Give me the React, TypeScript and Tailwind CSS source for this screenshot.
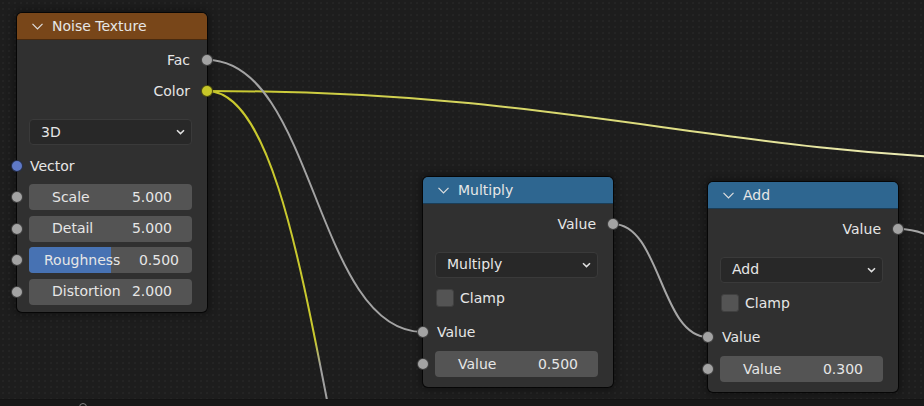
import React from "react";

function HeaderChevron() {
  return (
    <svg width="11" height="7" viewBox="0 0 11 7" className="shrink-0">
      <path d="M0.5 0.8 L5.5 6 L10.5 0.8" fill="none" stroke="#dedede" strokeWidth="1.2" />
    </svg>
  );
}

function SmallChevron() {
  return (
    <svg width="9" height="6" viewBox="0 0 9 6" className="shrink-0">
      <path d="M1 1.2 L4.5 4.6 L8 1.2" fill="none" stroke="#e0e0e0" strokeWidth="1.5" />
    </svg>
  );
}

function Socket({ side, color }: { side: "left" | "right"; color: string }) {
  const pos = side === "left" ? "left-[-6px]" : "right-[-6px]";
  return (
    <span
      className={`absolute ${pos} top-1/2 -translate-y-1/2 w-[12px] h-[12px] rounded-full border border-black/60 ${color}`}
    />
  );
}

function OutputRow({ label, color }: { label: string; color: string }) {
  return (
    <div className="relative h-[31px] flex items-center justify-end pr-[17px]">
      <span>{label}</span>
      <Socket side="right" color={color} />
    </div>
  );
}

function Dropdown({ label, className }: { label: string; className: string }) {
  return (
    <div
      className={`ml-[12px] mr-[15px] h-[26px] rounded-[4px] bg-[#282828] border border-[#3a3a3a] flex items-center justify-between pl-[11px] pr-[6px] ${className}`}
    >
      <span>{label}</span>
      <SmallChevron />
    </div>
  );
}

function NumberField({ label, value, rowClass }: { label: string; value: string; rowClass: string }) {
  return (
    <div className={`relative flex items-center ${rowClass}`}>
      <Socket side="left" color="bg-[#a3a3a3]" />
      <div className="ml-[12px] mr-[15px] flex-1 h-[26px] rounded-[4px] bg-[#545454] flex items-center justify-between pl-[23px] pr-[20px]">
        <span>{label}</span>
        <span>{value}</span>
      </div>
    </div>
  );
}

function SliderField({ label, value, fill }: { label: string; value: string; fill: string }) {
  return (
    <div className="relative h-[31.5px] flex items-center">
      <Socket side="left" color="bg-[#a3a3a3]" />
      <div className="relative ml-[12px] mr-[15px] flex-1 h-[26px] rounded-[4px] bg-[#545454] overflow-hidden">
        <div className={`absolute left-0 top-0 bottom-0 bg-[#4772b3] ${fill}`} />
        <div className="relative h-full flex items-center justify-between pl-[15px] pr-[13px]">
          <span>{label}</span>
          <span>{value}</span>
        </div>
      </div>
    </div>
  );
}

function Header({ title, color }: { title: string; color: string }) {
  return (
    <div
      className={`h-[27px] rounded-t-[5px] border-b border-black/40 flex items-center pl-[15px] gap-[9px] text-[#e6e6e6] ${color}`}
    >
      <HeaderChevron />
      <span>{title}</span>
    </div>
  );
}

function MathNode({ title, mode, value, pos }: { title: string; mode: string; value: string; pos: string }) {
  return (
    <div
      className={`absolute ${pos} w-[190px] rounded-[5px] bg-[#303030] ring-1 ring-black/70 shadow-[0_0_7px_3px_rgba(0,0,0,0.35)]`}
    >
      <Header title={title} color="bg-[#2e6690]" />
      <div className="pt-[4.5px] pb-[7.5px]">
        <OutputRow label="Value" color="bg-[#a3a3a3]" />
        <Dropdown label={mode} className="mt-[12px]" />
        <div className="mt-[5px] h-[31px] flex items-center pl-[13px] gap-[6px]">
          <span className="w-[18px] h-[18px] rounded-[3px] bg-[#545454] border border-[#404040]" />
          <span>Clamp</span>
        </div>
        <div className="relative mt-[3px] h-[31px] flex items-center pl-[14px]">
          <Socket side="left" color="bg-[#a3a3a3]" />
          <span>Value</span>
        </div>
        <NumberField label="Value" value={value} rowClass="mt-[1px] h-[31px]" />
      </div>
    </div>
  );
}

function NoiseNode() {
  return (
    <div className="absolute left-[17px] top-[13px] w-[190px] rounded-[5px] bg-[#303030] ring-1 ring-black/70 shadow-[0_0_7px_3px_rgba(0,0,0,0.35)]">
      <Header title="Noise Texture" color="bg-[#784619]" />
      <div className="pt-[4.5px] pb-[4.5px]">
        <OutputRow label="Fac" color="bg-[#a3a3a3]" />
        <OutputRow label="Color" color="bg-[#c7c729]" />
        <Dropdown label="3D" className="mt-[12.5px]" />
        <div className="relative mt-[5.5px] h-[31px] flex items-center pl-[13px]">
          <Socket side="left" color="bg-[#5f79c6]" />
          <span>Vector</span>
        </div>
        <NumberField label="Scale" value="5.000" rowClass="h-[31.5px]" />
        <NumberField label="Detail" value="5.000" rowClass="h-[31.5px]" />
        <SliderField label="Roughness" value="0.500" fill="w-1/2" />
        <NumberField label="Distortion" value="2.000" rowClass="h-[31.5px]" />
      </div>
    </div>
  );
}

function Wires() {
  return (
    <svg className="absolute inset-0" width="924" height="399">
      <defs>
        <linearGradient id="colDown" gradientUnits="userSpaceOnUse" x1="207" y1="91" x2="447" y2="709">
          <stop offset="0.41" stopColor="#c9c92e" />
          <stop offset="0.45" stopColor="#a0a0a0" />
        </linearGradient>
        <linearGradient id="colRight" gradientUnits="userSpaceOnUse" x1="207" y1="0" x2="924" y2="0">
          <stop offset="0" stopColor="#c8c82c" />
          <stop offset="1" stopColor="#ecebb6" />
        </linearGradient>
      </defs>
      <g fill="none" strokeWidth="2" strokeLinecap="round">
        <path d="M207 91 C560 91 700 150 1000 160" stroke="url(#colRight)" />
        <path d="M207 91 C327 91 327 709 447 709" stroke="url(#colDown)" />
        <path d="M207 60 C315 60 315 332 423 332" stroke="#a3a3a3" />
        <path d="M613 224 C660.5 224 660.5 337 708 337" stroke="#a6a6a6" />
        <path d="M898 229 C974 229 974 330 1050 330" stroke="#a6a6a6" />
      </g>
    </svg>
  );
}

export default function App() {
  return (
    <div className="w-[924px] h-[406px] flex flex-col overflow-hidden font-['DejaVu_Sans',sans-serif] text-[14px] text-[#e6e6e6]">
      <div className="relative h-[399px] overflow-hidden bg-[#1d1d1d] bg-[radial-gradient(circle,#242424_0.7px,transparent_0.9px)] bg-[length:6px_6px]">
        <Wires />
        <NoiseNode />
        <MathNode title="Multiply" mode="Multiply" value="0.500" pos="left-[423px] top-[177px]" />
        <MathNode title="Add" mode="Add" value="0.300" pos="left-[708px] top-[182px]" />
      </div>
      <div className="h-[7px] bg-[#181818] border-t border-[#141414]">
        <span className="block ml-[79px] mt-[3px] w-[8px] h-[8px] rounded-full border border-[#808080]" />
      </div>
    </div>
  );
}
